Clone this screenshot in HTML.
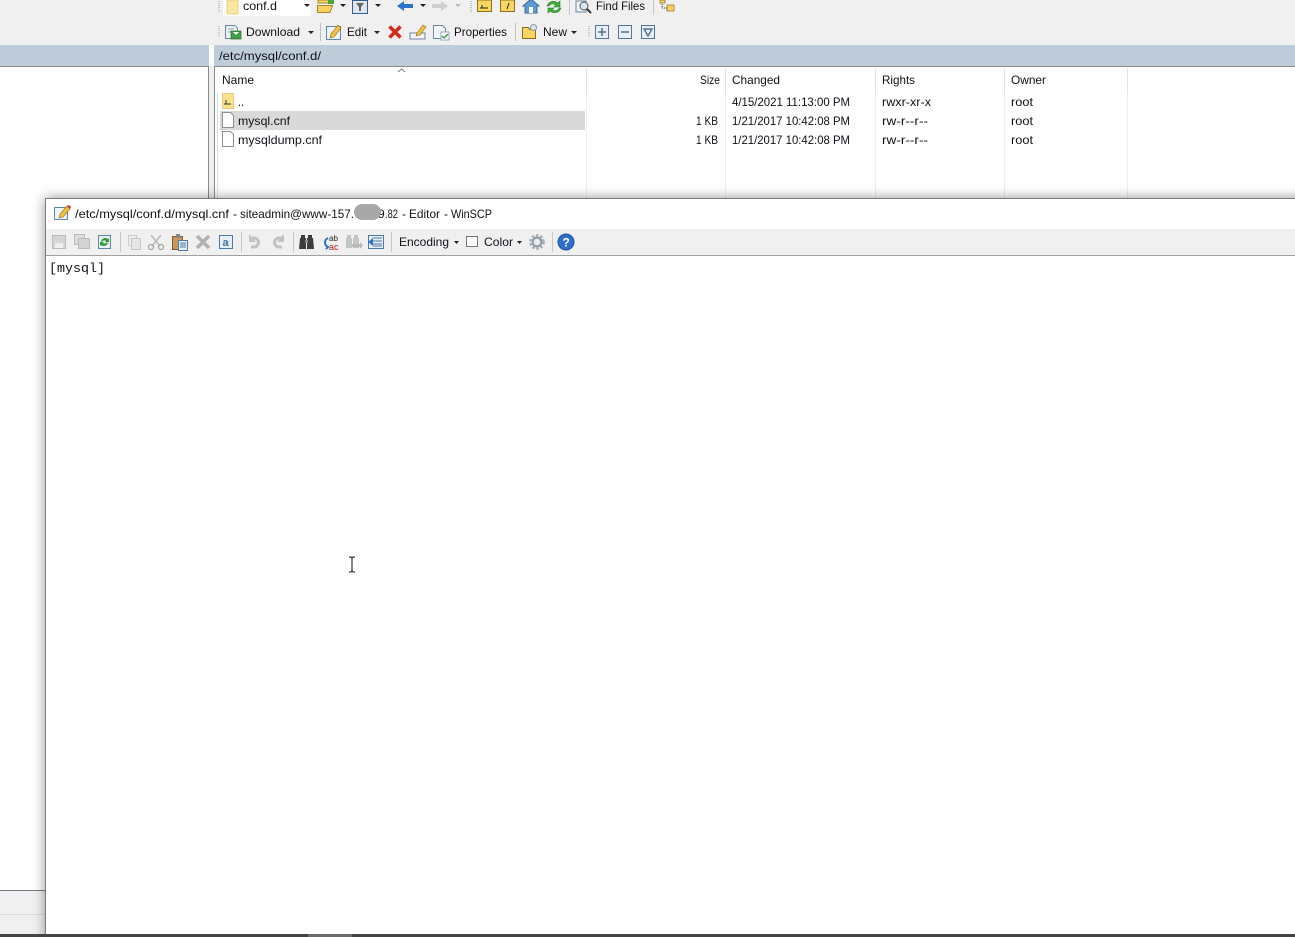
<!DOCTYPE html>
<html><head><meta charset="utf-8"><style>
html,body{margin:0;padding:0;background:#fff;width:1295px;height:937px;overflow:hidden}
svg{display:block}
text{font-family:"Liberation Sans",sans-serif;font-size:12px;fill:#101018}
.m{font-family:"Liberation Mono",monospace;font-size:13.33px}
</style></head><body>
<svg width="1295" height="937" viewBox="0 0 1295 937" xmlns="http://www.w3.org/2000/svg">
<defs>
<filter id="blur" filterUnits="userSpaceOnUse" x="0" y="150" width="1295" height="787"><feGaussianBlur stdDeviation="6"/></filter>
</defs>
<rect width="1295" height="937" fill="#fff"/>
<!-- top toolbars -->
<rect width="1295" height="45" fill="#f0f0f0"/>
<rect x="223" y="0" width="88" height="16" fill="#fff"/>
<path d="M219 1v11M219 26v12M471 1v11M589 26v12" stroke="#c4c4c4" stroke-width="2" stroke-dasharray="1 1"/>
<!-- row 1 -->
<path d="M227 0h11v14h-11z" fill="#fbe7a0" stroke="#e8cf85"/>
<text x="243" y="10" textLength="34" lengthAdjust="spacingAndGlyphs">conf.d</text>
<path d="M304 4h6l-3 3z" fill="#222"/>
<path d="M318 0h12v3h-12zM317.500 5.500h15l-2.500 7h-12.500z" fill="#f6d35f" stroke="#a8882c"/><path d="M328 0h6v4h-6z" fill="#45a83b"/>
<path d="M340 4h6l-3 3z" fill="#222"/>
<rect x="352.500" y="0.500" width="15" height="13" fill="#dfe6ee" stroke="#2f5d8f"/><path d="M356 3h8l-3 4v4h-2V7z" fill="#666"/>
<path d="M375 4h6l-3 3z" fill="#222"/>
<path d="M397 6l7-5v3h9v4h-9v3z" fill="#2c74c9"/><path d="M420 4h6l-3 3z" fill="#222"/>
<path d="M448 6l-7-5v3h-9v4h9v3z" fill="#cfcfcf"/><path d="M455 4h6l-3 3z" fill="#bbb"/>
<path d="M477.500 0v11.500h14V0z" fill="#f8d65f" stroke="#8a6d1e"/><path d="M480 8h6M482 5v3h6" stroke="#222" fill="none"/>
<path d="M500.500 0v11.500h14V0z" fill="#f8d65f" stroke="#8a6d1e"/><path d="M509 3l-2 6" stroke="#222"/>
<path d="M523 6l8-7 8 7h-2v7h-12V6z" fill="#5b9bd5" stroke="#45688f"/><rect x="529" y="7" width="4" height="6" fill="#fff"/>
<path d="M547 6c2-5 7-6 11-3l2-2v6h-6l2-2c-3-2-6-1-7 1zM561 8c-2 5-7 6-11 3l-2 2V8h6l-2 2c3 1 6 1 7-2z" fill="#3faf3a" stroke="#2b7f28" stroke-width=".6"/>
<path d="M569.500 0v15M653.500 0v15" stroke="#c8c8c8"/>
<rect x="576" y="1" width="10" height="11" fill="#eef3f8" stroke="#6d87a3"/><circle cx="584" cy="6" r="4" fill="#dbe8f3" stroke="#555"/><path d="M587 9l4 4" stroke="#333" stroke-width="2"/>
<text x="596" y="10" textLength="49" lengthAdjust="spacingAndGlyphs">Find Files</text>
<rect x="660" y="0" width="5" height="3" fill="#f6d35f" stroke="#8a6d1e" stroke-width=".7"/><rect x="667" y="5" width="7" height="6" fill="#f6d35f" stroke="#8a6d1e" stroke-width=".7"/><path d="M662 4v4h5" stroke="#333" stroke-dasharray="1 1" fill="none"/>
<!-- row 2 -->
<path d="M225.500 25.500h9l3 3v10h-12z" fill="#eef3f8" stroke="#6d87a3"/><path d="M228 29h6M228 32h6" stroke="#8aa0b8"/><rect x="231" y="31" width="10" height="8" fill="#3f9f45" stroke="#27702c" stroke-width=".7"/><path d="M233 32l3 3 3-3z" fill="#fff"/>
<text x="246" y="36" textLength="54" lengthAdjust="spacingAndGlyphs">Download</text>
<path d="M308 31h6l-3 3z" fill="#222"/>
<path d="M320.500 23v18" stroke="#c0c0c0"/>
<rect x="326.500" y="26.500" width="14" height="13" fill="#eef3f8" stroke="#5f86ad"/><path d="M330 38l1-4 7-9 3 3-7 9z" fill="#f0c040" stroke="#8a6d1e" stroke-width=".6"/>
<text x="347" y="36" textLength="20" lengthAdjust="spacingAndGlyphs">Edit</text>
<path d="M374 31h6l-3 3z" fill="#222"/>
<path d="M389.500 26.500l11 11M400.500 26.500l-11 11" stroke="#d32a1e" stroke-width="3.600"/>
<rect x="410" y="33" width="15" height="6" fill="#f5f5f5" stroke="#6d87a3"/><path d="M416 36l1-3 6-8 3 2-6 8z" fill="#f0c040" stroke="#8a6d1e" stroke-width=".6"/>
<path d="M433.500 25.500h9l3 3v10h-12z" fill="#f4f7fa" stroke="#6d87a3"/><rect x="441" y="32" width="8" height="8" fill="#fff" stroke="#6d87a3" stroke-width=".7"/><path d="M442 36l2 2 4-4" stroke="#2f9b36" stroke-width="1.300" fill="none"/>
<text x="454" y="36" textLength="53" lengthAdjust="spacingAndGlyphs">Properties</text>
<path d="M515.500 23v18" stroke="#c0c0c0"/>
<path d="M522.500 27.500h6l1 2h6v9h-13z" fill="#f8d65f" stroke="#8a6d1e"/><circle cx="533.500" cy="27.500" r="3" fill="#dfe3e6" stroke="#8899aa"/>
<text x="543" y="36" textLength="24" lengthAdjust="spacingAndGlyphs">New</text>
<path d="M571 31h6l-3 3z" fill="#222"/>
<rect x="595.500" y="25.500" width="13" height="13" fill="#eaf0f6" stroke="#52759c"/><path d="M598 32h8M602 28v8" stroke="#52759c" stroke-width="1.600"/>
<rect x="618.500" y="25.500" width="13" height="13" fill="#eaf0f6" stroke="#52759c"/><path d="M621 32h8" stroke="#52759c" stroke-width="1.600"/>
<rect x="641.500" y="25.500" width="13" height="13" fill="#eaf0f6" stroke="#52759c"/><path d="M644 29h8l-4 7z" fill="none" stroke="#52759c" stroke-width="1.500"/>
<!-- path bars -->
<rect y="45" width="209" height="21" fill="#bfcdda"/>
<rect x="214" y="45" width="1081" height="21" fill="#bfcdda"/>
<text x="219" y="60" textLength="102" lengthAdjust="spacingAndGlyphs">/etc/mysql/conf.d/</text>
<!-- left panel -->
<rect x="209" y="66" width="5" height="133" fill="#f0f0f0"/>
<path d="M0 66.500h208.500V199M214.500 199V66.500H1295" stroke="#8a8a8a" fill="none"/>
<!-- list columns -->
<path d="M217.500 94v105" stroke="#cfe2f5"/>
<path d="M586.500 68v131M725.500 68v131M875.500 68v131M1004.500 68v131M1127.500 68v131" stroke="#e8eef5"/>
<path d="M586.500 68v25M725.500 68v25M875.500 68v25M1004.500 68v25M1127.500 68v25" stroke="#e2e2e2"/>
<path d="M398 72l3.500-3 3.500 3" stroke="#777" fill="none"/>
<text x="222" y="84" textLength="32" lengthAdjust="spacingAndGlyphs">Name</text>
<text x="700" y="84" textLength="20" lengthAdjust="spacingAndGlyphs">Size</text>
<text x="732" y="84" textLength="48" lengthAdjust="spacingAndGlyphs">Changed</text>
<text x="882" y="84" textLength="33" lengthAdjust="spacingAndGlyphs">Rights</text>
<text x="1011" y="84" textLength="35" lengthAdjust="spacingAndGlyphs">Owner</text>
<rect x="220" y="111" width="365" height="19" fill="#d9d9d9"/>
<rect x="222.500" y="93.500" width="11" height="15" fill="#fbe28a" stroke="#e9cd7c"/><path d="M224 104h5M226 100v4h5" stroke="#333" fill="none"/>
<text x="238" y="106" textLength="6" lengthAdjust="spacingAndGlyphs">..</text>
<path d="M222.500 112.500h8l3 3v12h-11z" fill="#fff" stroke="#8f8f8f"/>
<text x="238" y="125" textLength="52" lengthAdjust="spacingAndGlyphs">mysql.cnf</text>
<path d="M222.500 131.500h8l3 3v12h-11z" fill="#fff" stroke="#8f8f8f"/>
<text x="238" y="144" textLength="84" lengthAdjust="spacingAndGlyphs">mysqldump.cnf</text>
<text x="732" y="106" textLength="118" lengthAdjust="spacingAndGlyphs">4/15/2021 11:13:00 PM</text>
<text x="882" y="106" textLength="49" lengthAdjust="spacingAndGlyphs">rwxr-xr-x</text>
<text x="1011" y="106" textLength="22" lengthAdjust="spacingAndGlyphs">root</text>
<text x="696" y="125" textLength="22" lengthAdjust="spacingAndGlyphs">1 KB</text>
<text x="732" y="125" textLength="118" lengthAdjust="spacingAndGlyphs">1/21/2017 10:42:08 PM</text>
<text x="882" y="125" textLength="46" lengthAdjust="spacingAndGlyphs">rw-r--r--</text>
<text x="1011" y="125" textLength="22" lengthAdjust="spacingAndGlyphs">root</text>
<text x="696" y="144" textLength="22" lengthAdjust="spacingAndGlyphs">1 KB</text>
<text x="732" y="144" textLength="118" lengthAdjust="spacingAndGlyphs">1/21/2017 10:42:08 PM</text>
<text x="882" y="144" textLength="46" lengthAdjust="spacingAndGlyphs">rw-r--r--</text>
<text x="1011" y="144" textLength="22" lengthAdjust="spacingAndGlyphs">root</text>
<!-- bottom-left panel -->
<rect x="0" y="890" width="45" height="44" fill="#f0f0f0"/>
<path d="M0 890.500h45" stroke="#77778a"/><path d="M0 914.500h45" stroke="#dcdcdc"/>
<!-- window shadow -->
<rect x="45" y="198" width="1300" height="760" fill="#000" fill-opacity=".42" filter="url(#blur)"/>
<!-- editor window -->
<rect x="45" y="198" width="1250" height="736" fill="#fff"/>
<path d="M45.500 934V198.500H1295" stroke="#7c7c7c" fill="none"/>
<rect x="46" y="229" width="1249" height="26" fill="#f0f0f0"/>
<path d="M46 255.500h1249" stroke="#a0a0a0"/>
<!-- title -->
<rect x="54.500" y="207.500" width="13" height="12" fill="#eef3f8" stroke="#5f86ad"/><path d="M59 218l1-4 7-8 3 3-7 8z" fill="#f0c040" stroke="#8a6d1e" stroke-width=".6"/><path d="M67 206l3 3 1-2-2-2z" fill="#d33"/>
<text x="75" y="218" textLength="154" lengthAdjust="spacingAndGlyphs">/etc/mysql/conf.d/mysql.cnf</text>
<text x="233" y="218">-</text>
<text x="240" y="218" textLength="114" lengthAdjust="spacingAndGlyphs">siteadmin@www-157.</text>
<text x="378" y="218">9</text>
<rect x="354" y="204" width="27" height="16" rx="8" fill="#aaa7a7"/>
<text x="385" y="218" textLength="13" lengthAdjust="spacingAndGlyphs">.82</text>
<text x="402" y="218">-</text>
<text x="409" y="218" textLength="31" lengthAdjust="spacingAndGlyphs">Editor</text>
<text x="444" y="218">-</text>
<text x="451" y="218" textLength="41" lengthAdjust="spacingAndGlyphs">WinSCP</text>
<!-- editor toolbar -->
<rect x="52.500" y="235.500" width="13" height="13" fill="#d5d5d5" stroke="#bbb"/><rect x="55" y="243" width="8" height="5" fill="#eee"/>
<rect x="74.500" y="234.500" width="10" height="10" fill="#ddd" stroke="#bbb"/><rect x="78.500" y="238.500" width="11" height="10" fill="#d5d5d5" stroke="#bbb"/>
<rect x="98.500" y="235.500" width="12" height="13" fill="#eaf0f6" stroke="#5f86ad"/><path d="M101 241c1-3 5-4 7-2l1-1v4h-4l1-1c-1-1-3-1-4 1zM108 243c-1 3-5 4-7 2l-1 1v-4h4l-1 1c1 1 3 1 4-1z" fill="#2f9b36"/>
<path d="M120.500 232v20" stroke="#c8c8c8"/>
<rect x="128.500" y="235.500" width="8" height="10" fill="#eee" stroke="#ccc"/><rect x="131.500" y="238.500" width="9" height="11" fill="#e6e6e6" stroke="#c8c8c8"/>
<path d="M151 235l9 11M161 235l-9 11" stroke="#bbb" stroke-width="1.500"/><circle cx="151" cy="247" r="2.500" fill="none" stroke="#aaa" stroke-width="1.300"/><circle cx="161" cy="247" r="2.500" fill="none" stroke="#aaa" stroke-width="1.300"/>
<rect x="172.500" y="236.500" width="10" height="13" fill="#c9975a" stroke="#7a5a30"/><rect x="176" y="234" width="4" height="4" fill="#888"/><rect x="178.500" y="240.500" width="9" height="10" fill="#e6eef6" stroke="#4e7aa8"/><path d="M180 243h6M180 245h6M180 247h6" stroke="#4e7aa8"/>
<path d="M197 236l12 12M209 236l-12 12" stroke="#b2b2b2" stroke-width="3.500"/>
<rect x="219.500" y="235.500" width="13" height="13" fill="#e6eef6" stroke="#4e7aa8"/>
<text x="222.500" y="246" style="font-size:11px;font-weight:bold;fill:#3f6ea0">a</text>
<path d="M241.500 232v20" stroke="#c8c8c8"/>
<path d="M251 238h3a4.500 4.500 0 1 1 0 9h-3" fill="none" stroke="#c2c2c2" stroke-width="3"/><path d="M249 234v8h7z" fill="#c2c2c2"/>
<path d="M282 238h-3a4.500 4.500 0 1 0 0 9h3" fill="none" stroke="#c2c2c2" stroke-width="3"/><path d="M284 234v8h-7z" fill="#c2c2c2"/>
<path d="M293.500 232v20" stroke="#c8c8c8"/>
<path d="M301 235h4v3h-4zM308 235h4v3h-4zM300 238h6v11h-7zM307 238h6l1 11h-7z" fill="#3c3c3c"/><rect x="305" y="240" width="3" height="3" fill="#888"/>
<text x="329" y="241" style="font-size:8px;fill:#222">ab</text><text x="329" y="250" style="font-size:9px;fill:#b02020">ac</text><path d="M328 238c-4 2-4 7 0 9l-2 2" fill="none" stroke="#2c74c9" stroke-width="2"/>
<path d="M347 235h4v3h-4zM354 235h4v3h-4zM346 238h6v10h-6zM353 238h6v10h-6z" fill="#c4c4c4"/><path d="M352 244h8v-2l3 3.500-3 3.500v-2h-8z" fill="#b8b8b8"/>
<rect x="368.500" y="235.500" width="15" height="13" fill="#e6eef6" stroke="#4e7aa8"/><path d="M373 238h9M373 241h9M373 244h9M373 246h9" stroke="#4e7aa8"/><path d="M368 242l5-4v8z" fill="#2c74c9"/>
<path d="M391.500 232v20" stroke="#c8c8c8"/>
<text x="399" y="246" textLength="50" lengthAdjust="spacingAndGlyphs">Encoding</text>
<path d="M454 241h5l-2.500 3z" fill="#222"/>
<rect x="466.500" y="236.500" width="11" height="10" fill="#fff" stroke="#777"/>
<text x="484" y="246" textLength="29" lengthAdjust="spacingAndGlyphs">Color</text>
<path d="M517 241h5l-2.500 3z" fill="#222"/>
<circle cx="537" cy="242" r="4.500" fill="#dfe4e9" stroke="#8a98a6" stroke-width="2"/><circle cx="537" cy="242" r="6.800" fill="none" stroke="#98a5b2" stroke-width="2" stroke-dasharray="2.400 2"/><circle cx="537" cy="242" r="2" fill="#f0f0f0"/>
<path d="M552.500 232v20" stroke="#c8c8c8"/>
<circle cx="566" cy="242" r="8" fill="#2f6fc9" stroke="#1f55a5"/>
<text x="562.500" y="246.500" style="font-size:12px;font-weight:bold;fill:#fff">?</text>
<!-- content -->
<text class="m" x="49" y="272">[mysql]</text>
<!-- I-beam -->
<path d="M349 557h2l1 1 1-1h2M352 558v13M349 572h2l1-1 1 1h2" stroke="#111" fill="none"/>
<!-- taskbar edge -->
<rect x="0" y="934" width="1295" height="3" fill="#444"/>
<rect x="308" y="934" width="44" height="3" fill="#6b6b6b"/>
</svg>
</body></html>
